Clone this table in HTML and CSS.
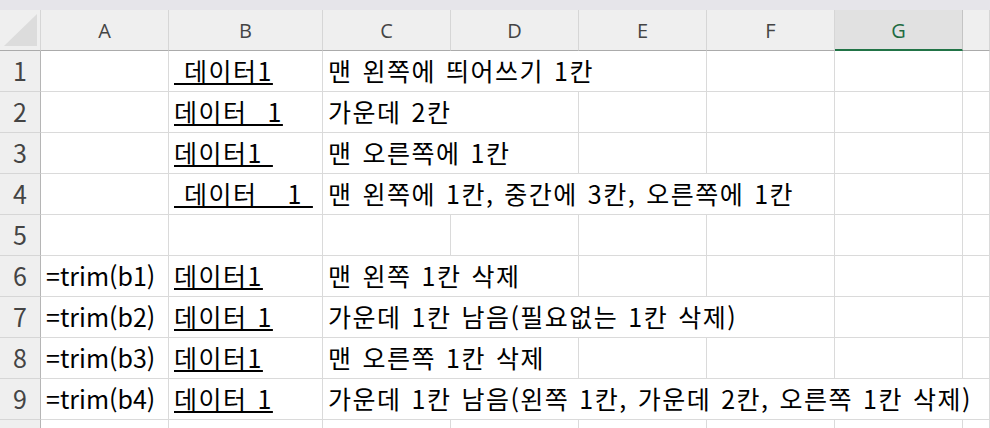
FILE: index.html
```html
<!DOCTYPE html>
<html lang="ko">
<head>
<meta charset="utf-8">
<title>Sheet</title>
<link rel="stylesheet" href="styles.css">
</head>
<body>
<div class="topbar"></div>
<div class="grid">
  <div class="corner"><svg class="tri" width="40" height="40" viewBox="0 0 40 40"><polygon points="4,36 37,36 37,4" fill="#dcdcdc"/></svg></div>
  <div class="ch">A</div>
  <div class="ch">B</div>
  <div class="ch">C</div>
  <div class="ch">D</div>
  <div class="ch">E</div>
  <div class="ch">F</div>
  <div class="ch sel">G</div>
  <div class="ch"></div>

  <div class="rh">1</div>
  <div class="c"></div>
  <div class="c"><span class="u"> 데이터1</span></div>
  <div class="c s3">맨 왼쪽에 띄어쓰기 1칸</div>
  <div class="c"></div><div class="c"></div><div class="c"></div>

  <div class="rh">2</div>
  <div class="c"></div>
  <div class="c"><span class="u">데이터  1</span></div>
  <div class="c s2">가운데 2칸</div>
  <div class="c"></div><div class="c"></div><div class="c"></div><div class="c"></div>

  <div class="rh">3</div>
  <div class="c"></div>
  <div class="c"><span class="u">데이터1 </span></div>
  <div class="c s2">맨 오른쪽에 1칸</div>
  <div class="c"></div><div class="c"></div><div class="c"></div><div class="c"></div>

  <div class="rh">4</div>
  <div class="c"></div>
  <div class="c"><span class="u"> 데이터   1 </span></div>
  <div class="c s4">맨 왼쪽에 1칸, 중간에 3칸, 오른쪽에 1칸</div>
  <div class="c"></div><div class="c"></div>

  <div class="rh">5</div>
  <div class="c"></div><div class="c"></div><div class="c"></div><div class="c"></div><div class="c"></div><div class="c"></div><div class="c"></div><div class="c"></div>

  <div class="rh">6</div>
  <div class="c lat">=trim(b1)</div>
  <div class="c"><span class="u">데이터1</span></div>
  <div class="c s2">맨 왼쪽 1칸 삭제</div>
  <div class="c"></div><div class="c"></div><div class="c"></div><div class="c"></div>

  <div class="rh">7</div>
  <div class="c lat">=trim(b2)</div>
  <div class="c"><span class="u">데이터 1</span></div>
  <div class="c s4">가운데 1칸 남음(필요없는 1칸 삭제)</div>
  <div class="c"></div><div class="c"></div>

  <div class="rh">8</div>
  <div class="c lat">=trim(b3)</div>
  <div class="c"><span class="u">데이터1</span></div>
  <div class="c s2">맨 오른쪽 1칸 삭제</div>
  <div class="c"></div><div class="c"></div><div class="c"></div><div class="c"></div>

  <div class="rh">9</div>
  <div class="c lat">=trim(b4)</div>
  <div class="c"><span class="u">데이터 1</span></div>
  <div class="c s6">가운데 1칸 남음(왼쪽 1칸, 가운데 2칸, 오른쪽 1칸 삭제)</div>

  <div class="rh"></div>
  <div class="c"></div><div class="c"></div><div class="c"></div><div class="c"></div><div class="c"></div><div class="c"></div><div class="c"></div><div class="c"></div>
</div>
</body>
</html>
```
FILE: styles.css
```css
html, body {
  margin: 0;
  padding: 0;
}
body {
  width: 990px;
  height: 428px;
  overflow: hidden;
  background: #ffffff;
  font-family: "Noto Sans CJK KR", sans-serif;
}
.topbar {
  height: 10px;
  background: #e6e5ea;
}
.grid {
  display: grid;
  grid-template-columns: 41px 128px 154px 128px 128px 128px 128px 128px 1fr;
  grid-template-rows: 41px;
  grid-auto-rows: 41px;
}
.corner {
  box-sizing: border-box;
  background: #efefef;
  border-right: 1px solid #d6d6d6;
  border-bottom: 1px solid #ababab;
}
.tri {
  display: block;
}
.ch {
  box-sizing: border-box;
  background: #efefef;
  border-right: 1px solid #d6d6d6;
  border-bottom: 1px solid #ababab;
  display: flex;
  justify-content: center;
  align-items: flex-end;
  padding-bottom: 9px;
  font-family: "Open Sans", "Noto Sans CJK KR", sans-serif;
  font-size: 20px;
  line-height: 20px;
  color: #444444;
}
.ch.sel {
  background: #e1e1e1;
  color: #1e6b41;
  border-bottom: 2px solid #217346;
  border-right-color: #c4c4c4;
  padding-bottom: 8px;
}
.rh {
  box-sizing: border-box;
  background: #efefef;
  border-right: 1px solid #b5b5b5;
  border-bottom: 1px solid #d6d6d6;
  display: flex;
  justify-content: center;
  align-items: flex-end;
  padding-bottom: 8px;
  font-size: 25px;
  line-height: 25px;
  color: #444444;
}
.c {
  box-sizing: border-box;
  border-right: 1px solid #dadada;
  border-bottom: 1px solid #dadada;
  display: flex;
  align-items: flex-end;
  padding: 0 0 8px 5px;
  font-size: 25px;
  line-height: 25px;
  letter-spacing: 1.5px;
  word-spacing: 1.5px;
  white-space: pre;
  color: #000000;
  overflow: hidden;
}
.c.lat {
  letter-spacing: 0;
  word-spacing: 0;
}
.s2 { grid-column: span 2; }
.s3 { grid-column: span 3; }
.s4 { grid-column: span 4; }
.s6 { grid-column: span 6; }
.u {
  text-decoration: underline;
  text-decoration-thickness: 2px;
  text-underline-offset: 2px;
}
```
